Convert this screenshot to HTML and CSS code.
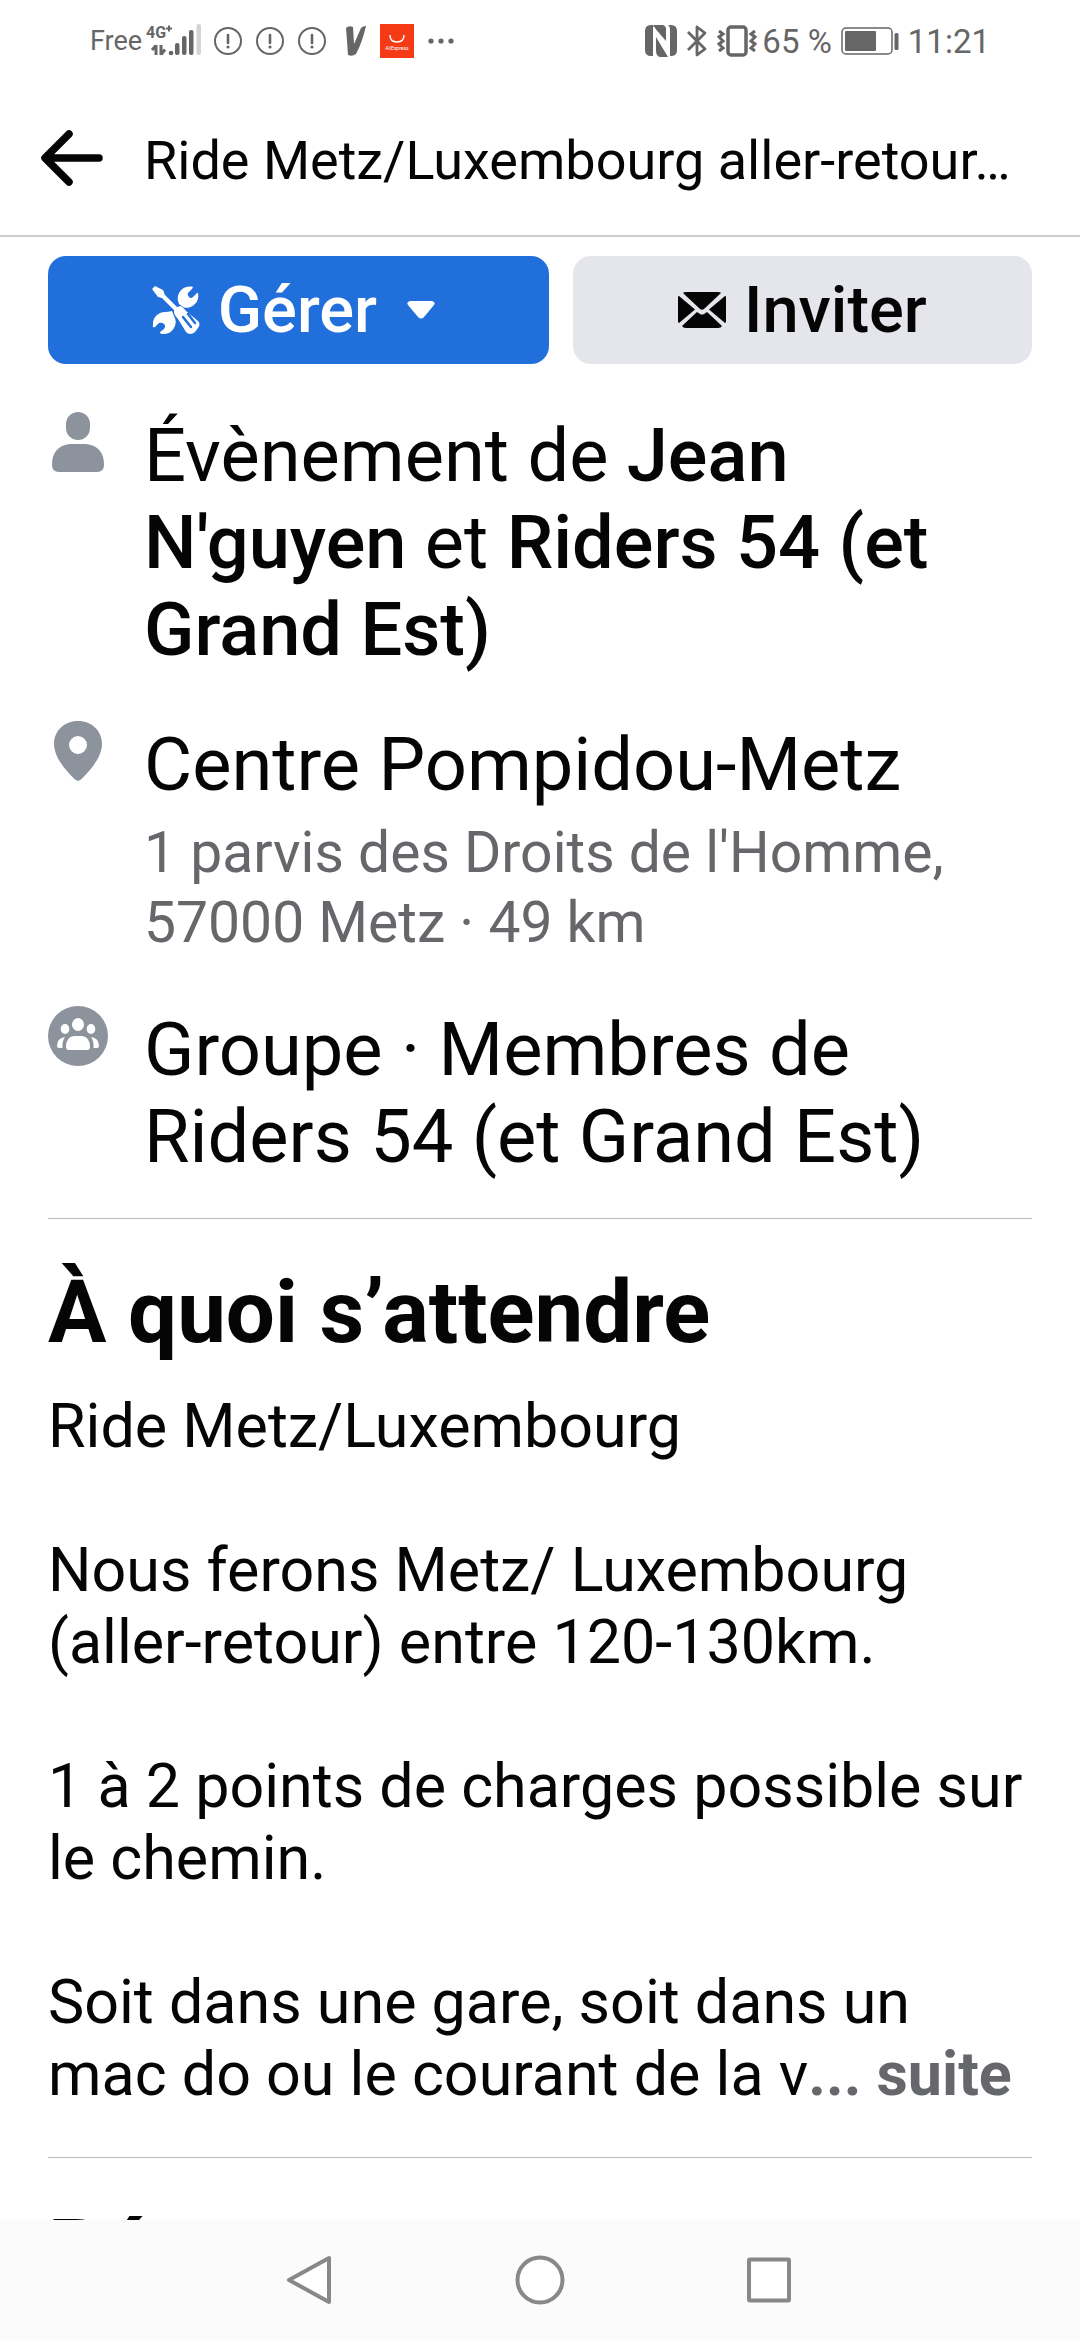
FILE: index.html
```html
<!DOCTYPE html>
<html lang="fr">
<head>
<meta charset="utf-8">
<meta name="viewport" content="width=device-width, initial-scale=1">
<title>Ride Metz/Luxembourg aller-retour</title>
<link rel="stylesheet" href="styles.css">
</head>
<body>
<div class="app">
  <div class="status">
    <div class="status-left">
      <span class="carrier">Free</span>
      <svg class="signal" width="56" height="34" viewBox="0 0 56 34" aria-hidden="true">
        <text class="net" x="0" y="14">4G</text>
        <path d="M23 1.500v6M20 4.500h6" stroke="currentColor" stroke-width="2" fill="none"/>
        <path d="M10 21v10M6 26l4-4.500M15 21v10M15 30.500l4-5" stroke="currentColor" stroke-width="3" fill="none"/>
        <g fill="currentColor"><circle cx="25" cy="29" r="2.300"/><rect x="29" y="19" width="4.500" height="12" rx="2"/><rect x="36" y="12" width="4.500" height="19" rx="2"/><rect x="43" y="6" width="4.500" height="25" rx="2"/></g>
        <rect x="50.500" y="0" width="4.500" height="31" rx="2" fill="#d4d4d4"/>
      </svg>
      <svg class="alert" width="28" height="28" viewBox="0 0 28 28"><g id="alert"><circle cx="14" cy="14" r="13" fill="none" stroke="currentColor" stroke-width="2"/><path d="M14 8v8" stroke="currentColor" stroke-width="2.600" stroke-linecap="round"/><circle cx="14" cy="20" r="1.600" fill="currentColor"/></g></svg>
      <svg class="alert" width="28" height="28" viewBox="0 0 28 28"><use href="#alert"/></svg>
      <svg class="alert" width="28" height="28" viewBox="0 0 28 28"><use href="#alert"/></svg>
      <svg class="vee" width="20" height="30" viewBox="0 0 20 30"><path d="M0 2Q3-1 7 1L8 18L15 2Q17 0 20 0Q16 17 10 28Q6 31 2 29Q1 14 0 2Z" fill="currentColor"/></svg>
      <svg class="shop" width="34" height="34" viewBox="0 0 34 34"><rect width="34" height="34" fill="#f53b15"/><path d="M10 11q0 7 7 7t7-7" fill="none" stroke="#fff" stroke-width="1.500"/><text class="shop-name" x="17" y="26" text-anchor="middle">AliExpress</text></svg>
      <svg class="more" width="26" height="6" viewBox="0 0 26 6" fill="currentColor"><circle cx="3" cy="3" r="2.600"/><circle cx="13" cy="3" r="2.600"/><circle cx="23" cy="3" r="2.600"/></svg>
    </div>
    <div class="status-right">
      <svg width="32" height="32" viewBox="0 0 32 32" fill="currentColor"><path d="M6 0h2v31H6Q0 31 0 25V6Q0 0 6 0ZM26 0h-3q2 1 2 5v26h1q6 0 6-6V6q0-6-6-6Z"/><path d="M8 1l13 15V4Q21 1 18 0H9ZM11 12V26q0 5 4 6h8Z"/><path d="M9 2L23 29" stroke="#fff" stroke-width="1"/></svg>
      <svg class="bluetooth" width="22" height="34" viewBox="0 0 22 34"><path d="M2 8L19 25L11 31V3L19 9L2 26" fill="none" stroke="currentColor" stroke-width="2.800" stroke-linejoin="round"/></svg>
      <svg class="vibrate" width="40" height="32" viewBox="0 0 40 32" fill="none" stroke="currentColor"><rect x="11" y="2" width="18" height="28" rx="3" stroke-width="3.500"/><path d="M2 6l4 3-4 3 4 4-4 3 4 4-4 3M38 6l-4 3 4 3-4 4 4 3-4 4 4 3" stroke-width="3"/></svg>
      <span class="clock">65 %</span>
      <svg class="battery" width="58" height="28" viewBox="0 0 58 28"><rect x="1" y="1" width="50" height="26" rx="4" fill="none" stroke="currentColor" stroke-width="1.500"/><rect x="4" y="4" width="31" height="20" rx="1" fill="currentColor"/><rect x="53.500" y="6" width="4" height="17" rx="1.500" fill="currentColor"/></svg>
      <span class="clock">11:21</span>
    </div>
  </div>

  <header class="topbar">
    <button class="back" type="button" aria-label="Retour">
      <svg width="62" height="56" viewBox="0 0 62 56"><path d="M28 4L4 28L28 52M5 28H58" fill="none" stroke="currentColor" stroke-width="7.500" stroke-linecap="round" stroke-linejoin="round"/></svg>
    </button>
    <h1 class="title">Ride Metz/Luxembourg aller-retour…</h1>
  </header>

  <main class="content">
    <div class="actions">
      <button class="btn btn-primary" type="button">
        <svg width="48" height="48" viewBox="0 0 48 48" fill="currentColor">
          <path d="M46 7A12 12 0 0 1 32 21.500L27 18L26 15A12 12 0 0 1 39 0.500Q42 0 40 3L36 7Q35 9 37 11Q39 13 41 11L45 7Z"/>
          <path d="M1 39A12 12 0 0 1 13 26Q16 26 20 25L22 30A12 12 0 0 1 11 48Q8 48 8 46L12 43Q14 40 12 38Q10 36 7 37L3 41Q0 42 1 39Z"/>
          <path d="M0 3L3 0L11 4L13 9L25 21L29 20Q32 22 34 25L46 35Q49 38 46 42L43 46Q38 50 34 46L26 33Q23 30 22 27L22 24L10 12L6 11Z"/>
          <path d="M31 31L39 41M36 28L43 37" stroke="#216fdb" stroke-width="2.500" stroke-linecap="round"/>
        </svg>
        <span>Gérer</span>
        <svg class="caret" width="28" height="18" viewBox="0 0 28 18"><path d="M3 0H25Q29 1 27 4L17 16Q14 19 11 16L1 4Q-1 1 3 0Z" fill="currentColor"/></svg>
      </button>
      <button class="btn btn-muted" type="button">
        <svg width="48" height="36" viewBox="0 0 48 36" fill="currentColor"><path d="M5 1Q6 0 8 0H40Q42 0 43 1L26 17Q24 18.500 22 17ZM0 5Q0 4 1 4L17 17.500L1 31Q0 31 0 29ZM48 5Q48 4 47 4L31 17.500L47 31Q48 31 48 29ZM4 34L19 20L22 22Q24 23 26 22L29 20L44 34Q43 36 40 36H8Q5 36 4 34Z"/></svg>
        <span>Inviter</span>
      </button>
    </div>

    <section class="details">
      <div class="row">
        <svg class="row-icon" width="60" height="60" viewBox="0 0 60 60" fill="currentColor"><rect x="18" y="0" width="24" height="28" rx="12"/><path d="M22 32H38Q56 34 56 53Q56 60 49 60H11Q4 60 4 53Q4 34 22 32Z"/></svg>
        <p class="lead">Évènement de <b>Jean N'guyen</b> et <b>Riders 54 (et Grand Est)</b></p>
      </div>
      <div class="row">
        <svg class="row-icon" width="60" height="60" viewBox="0 0 60 60" fill="currentColor"><path fill-rule="evenodd" d="M30 0C44 0 54 10 54 23C54 36 42 50 33 58.500Q30 61 27 58.500C18 50 6 36 6 23C6 10 16 0 30 0ZM30 15a9 9 0 1 0 0 18a9 9 0 1 0 0-18Z"/></svg>
        <div class="place">
          <p class="lead">Centre Pompidou-Metz</p>
          <p class="sub">1 parvis des Droits de l'Homme, 57000 Metz · 49 km</p>
        </div>
      </div>
      <div class="row">
        <svg class="row-icon" width="60" height="60" viewBox="0 0 60 60"><circle cx="30" cy="30" r="30" fill="currentColor"/><g fill="#fff"><ellipse cx="30" cy="18.500" rx="6" ry="6.500"/><ellipse cx="17" cy="23" rx="4.300" ry="5"/><ellipse cx="43" cy="23" rx="4.300" ry="5"/><path d="M26 30h8q8 1 8 11 0 3-3 3H21q-3 0-3-3 0-10 8-11ZM17 31q-3 4-2.500 11H11q-2 0-2-2 0-8 8-9ZM43 31q3 4 2.500 11H49q2 0 2-2 0-8-8-9Z"/></g></svg>
        <p class="lead">Groupe · Membres de Riders 54 (et Grand Est)</p>
      </div>
    </section>

    <section class="block">
      <h2 class="heading">À quoi s’attendre</h2>
      <div class="description" id="suite">
        <p>Ride Metz/Luxembourg</p>
        <p>Nous ferons Metz/ Luxembourg (aller-retour) entre 120-130km.</p>
        <p>1 à 2 points de charges possible sur le chemin.</p>
        <p>Soit dans une gare, soit dans un mac do ou le courant de la v<a class="see-more" href="#suite">... suite</a></p>
      </div>
    </section>

    <section class="block">
      <h2 class="heading">Ré</h2>
    </section>
  </main>

  <nav class="system-nav">
    <button type="button" aria-label="Précédent"><svg width="50" height="50" viewBox="0 0 50 50"><path d="M43 3V47L3 25Z"/></svg></button>
    <button type="button" aria-label="Accueil"><svg width="50" height="50" viewBox="0 0 50 50"><circle cx="25" cy="25" r="22.500"/></svg></button>
    <button type="button" aria-label="Applications récentes"><svg width="50" height="50" viewBox="0 0 50 50"><rect x="5" y="4.500" width="40" height="41" rx="1"/></svg></button>
  </nav>
</div>
</body>
</html>
```
FILE: styles.css
```css
* {
  box-sizing: border-box;
}

body {
  margin: 0;
  background: #fff;
  color: #050505;
  font-family: Roboto, "Liberation Sans", sans-serif;
}

h1, h2, p {
  margin: 0;
  font-weight: 400;
}

svg {
  display: block;
  flex: none;
}

button {
  padding: 0;
  border: 0;
  background: none;
  color: inherit;
  font: inherit;
}

.app {
  display: flex;
  flex-direction: column;
  height: 100vh;
  overflow: hidden;
}

/* Phone status bar */
.status {
  display: flex;
  flex: none;
  justify-content: space-between;
  height: 80px;
  padding: 2px 90px 0 90px;
  color: #666;
}

.status-left,
.status-right {
  display: flex;
  align-items: center;
}

.status-left {
  gap: 14px;
}

.status-right {
  gap: 9px;
}

.carrier {
  margin-right: -10px;
  font-size: 27px;
}

.signal {
  margin-right: -2px;
}

.net {
  font-size: 16px;
  font-weight: 700;
  fill: currentColor;
}

.shop-name {
  font-size: 5px;
  fill: #fff;
}

.vee {
  margin-left: 6px;
}

.clock {
  font-size: 33px;
}

.vibrate {
  margin-right: -4px;
}

/* Title bar */
.topbar {
  display: flex;
  flex: none;
  align-items: center;
  gap: 41px;
  height: 157px;
  padding: 0 48px 0 41px;
  border-bottom: 2px solid #ccc;
}

.title {
  overflow: hidden;
  padding-top: 6px;
  font-size: 54px;
  line-height: 72px;
  white-space: nowrap;
}

.content {
  flex: 1;
  min-height: 0;
  overflow: hidden;
  padding: 19px 48px 0;
}

/* Action buttons */
.actions {
  display: grid;
  grid-template-columns: 12fr 11fr;
  gap: 24px;
}

.btn {
  display: flex;
  align-items: center;
  justify-content: center;
  gap: 18px;
  height: 108px;
  border-radius: 18px;
  font-size: 65px;
  font-weight: 500;
}

.btn-primary {
  padding-right: 10px;
  background: #216fdb;
  color: #fff;
}

.btn-muted {
  background: #e4e6eb;
}

.caret {
  margin-left: 12px;
}

/* Event details */
.details {
  display: grid;
  gap: 48px;
  padding: 48px 0 38px;
}

.row {
  display: flex;
  gap: 36px;
}

.row-icon {
  color: #8c939d;
}

.lead {
  font-size: 74px;
  line-height: 87px;
}

.lead b {
  font-weight: 500;
}

.place {
  display: grid;
  gap: 10px;
}

.sub {
  color: #65676b;
  font-size: 57px;
  line-height: 70px;
}

.block {
  padding: 42px 0 47px;
  border-top: 1px solid #bbb;
}

.heading {
  margin-bottom: 27px;
  font-size: 87px;
  font-weight: 700;
  line-height: 102px;
}

.description {
  display: grid;
  gap: 72px;
  font-size: 61px;
  line-height: 72px;
}

.see-more {
  color: #65676b;
  font-weight: 700;
  text-decoration: none;
}

/* Android navigation keys */
.system-nav {
  display: flex;
  flex: none;
  align-items: center;
  justify-content: center;
  gap: 179px;
  height: 120px;
  background: #fbfbfb;
}

.system-nav svg {
  fill: #fff;
  stroke: #888;
  stroke-width: 4px;
  stroke-linejoin: round;
}
```
